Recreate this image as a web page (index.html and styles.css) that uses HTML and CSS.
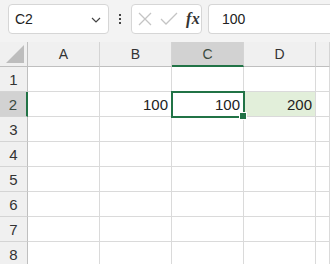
FILE: index.html
```html
<!DOCTYPE html>
<html>
<head>
<meta charset="utf-8">
<link rel="stylesheet" href="styles.css">
</head>
<body>
<div class="app">
  <div class="toolbar">
    <div class="namebox">
      <span class="name">C2</span>
      <svg class="chev" width="10" height="6" viewBox="0 0 10 6"><path d="M1 1 L5 5 L9 1" fill="none" stroke="#444" stroke-width="1.2"/></svg>
    </div>
    <div class="dots"><span></span><span></span><span></span></div>
    <div class="fbtns">
      <svg width="16" height="16" viewBox="0 0 16 16"><path d="M2 2 L14 14 M14 2 L2 14" stroke="#c4c4c4" stroke-width="1.3" fill="none"/></svg>
      <svg width="18" height="16" viewBox="0 0 18 16"><path d="M1 8 L6 13 L17 2" stroke="#c4c4c4" stroke-width="1.3" fill="none"/></svg>
      <span class="fx">fx</span>
    </div>
    <div class="finput">100</div>
  </div>
  <div class="grid">
    <div class="corner"><div class="tri"></div></div>
    <div class="ch">A</div>
    <div class="ch">B</div>
    <div class="ch sel">C</div>
    <div class="ch">D</div>
    <div class="ch"></div>

    <div class="rh">1</div>
    <div class="c"></div><div class="c"></div><div class="c"></div><div class="c"></div><div class="c"></div>

    <div class="rh sel">2</div>
    <div class="c"></div>
    <div class="c num">100</div>
    <div class="c num active">100<span class="handle"></span></div>
    <div class="c num green">200</div>
    <div class="c"></div>

    <div class="rh">3</div>
    <div class="c"></div><div class="c"></div><div class="c"></div><div class="c"></div><div class="c"></div>
    <div class="rh">4</div>
    <div class="c"></div><div class="c"></div><div class="c"></div><div class="c"></div><div class="c"></div>
    <div class="rh">5</div>
    <div class="c"></div><div class="c"></div><div class="c"></div><div class="c"></div><div class="c"></div>
    <div class="rh">6</div>
    <div class="c"></div><div class="c"></div><div class="c"></div><div class="c"></div><div class="c"></div>
    <div class="rh">7</div>
    <div class="c"></div><div class="c"></div><div class="c"></div><div class="c"></div><div class="c"></div>
    <div class="rh">8</div>
    <div class="c"></div><div class="c"></div><div class="c"></div><div class="c"></div><div class="c"></div>
  </div>
</div>
</body>
</html>
```

FILE: styles.css
```css
* { box-sizing: border-box; }
html, body { margin: 0; padding: 0; }
body {
  width: 330px;
  height: 264px;
  overflow: hidden;
  background: #f3f3f3;
  font-family: "Liberation Sans", Arial, sans-serif;
  color: #222;
}
.app { display: flex; flex-direction: column; }
.toolbar {
  height: 42px;
  display: flex;
  align-items: flex-start;
  padding: 4px 0 0 8px;
  background: #f3f3f3;
}
.namebox {
  width: 101px;
  height: 30px;
  background: #fff;
  border: 1px solid #d6d6d6;
  border-radius: 4px;
  display: flex;
  align-items: center;
  justify-content: space-between;
  padding: 0 7px 0 6px;
}
.name { font-size: 14px; color: #222; }
.chev { margin-top: 1px; }
.dots {
  width: 22px;
  height: 30px;
  display: flex;
  flex-direction: column;
  align-items: center;
  justify-content: center;
  gap: 2px;
}
.dots span { width: 2px; height: 2px; background: #444; display: block; }
.fbtns {
  width: 71px;
  height: 30px;
  background: #fff;
  border: 1px solid #d6d6d6;
  border-radius: 4px;
  display: flex;
  align-items: center;
  padding: 0 0 0 5px;
  gap: 7px;
}
.fx {
  font-family: "Liberation Serif", "Times New Roman", serif;
  font-style: italic;
  font-weight: bold;
  font-size: 16px;
  color: #333;
  margin-left: 1px;
  letter-spacing: 0.5px;
}
.finput {
  margin-left: 6px;
  flex: 1;
  height: 30px;
  background: #fff;
  border: 1px solid #d6d6d6;
  border-right: none;
  border-radius: 4px 0 0 4px;
  font-size: 14px;
  display: flex;
  align-items: center;
  padding-left: 13px;
}
.grid {
  display: grid;
  grid-template-columns: 28px 72px 72px 72px 72px 14px;
  grid-auto-rows: 25px;
  background: #fff;
}
.corner {
  background: #f0f0f0;
  border-right: 1px solid #bfbfbf;
  border-bottom: 1px solid #bfbfbf;
  position: relative;
}
.tri {
  position: absolute;
  right: 3px;
  bottom: 3px;
  width: 0;
  height: 0;
  border-left: 18px solid transparent;
  border-bottom: 18px solid #bdbdbd;
}
.ch {
  background: #f0f0f0;
  border-right: 1px solid #d4d4d4;
  border-bottom: 1px solid #bfbfbf;
  font-size: 14px;
  color: #333;
  display: flex;
  align-items: center;
  justify-content: center;
}
.ch.sel {
  background: #d2d2d2;
  border-bottom: 2px solid #217346;
  color: #3a4a40;
  padding-top: 1px;
}
.rh {
  background: #f0f0f0;
  border-right: 1px solid #bfbfbf;
  border-bottom: 1px solid #d4d4d4;
  font-size: 15px;
  color: #333;
  display: flex;
  align-items: center;
  justify-content: center;
}
.rh.sel {
  background: #d2d2d2;
  border-right: 2px solid #217346;
  color: #3a4a40;
}
.c {
  border-right: 1px solid #dadada;
  border-bottom: 1px solid #dadada;
  background: #fff;
}
.num {
  font-size: 15px;
  display: flex;
  align-items: center;
  justify-content: flex-end;
  padding-right: 3px;
  padding-top: 1px;
}
.green { background: #e2efda; }
.active {
  position: relative;
  outline: 2px solid #217346;
  outline-offset: -1px;
  z-index: 1;
}
.handle {
  position: absolute;
  right: -4px;
  bottom: -4px;
  width: 6px;
  height: 6px;
  background: #217346;
  border: 1px solid #fff;
  box-sizing: content-box;
}
```
